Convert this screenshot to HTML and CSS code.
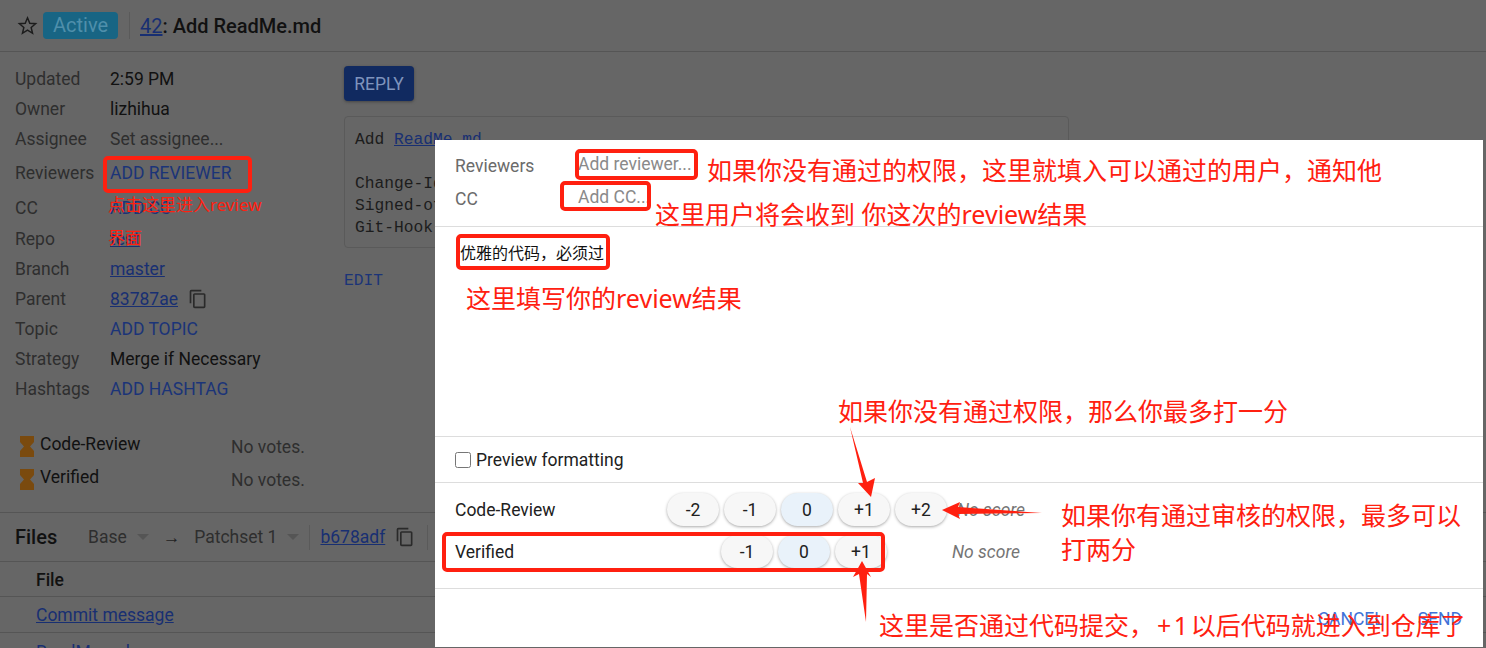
FILE: index.html
```html
<!DOCTYPE html>
<html>
<head>
    <title>42: Add ReadMe.md</title>
    <link rel="stylesheet" href="styles.css">
</head>

<body>
    <!-- Dimmed change page behind the reply dialog -->
    <header class="change-header">
        <svg class="star" viewBox="0 0 24 24"><path d="M12 3.2l2.6 6.2 6.7.55-5.1 4.4 1.55 6.55L12 17.4l-5.75 3.5 1.55-6.55-5.1-4.4 6.7-.55z" fill="none" stroke="#1c1c1c" stroke-width="1.7"/></svg>
        <span class="status">Active</span>
        <span class="header-sep"></span>
        <h1 class="subject"><a class="link">42</a>: Add ReadMe.md</h1>
    </header>

    <div class="change-main">
        <aside class="meta">
            <div class="meta-row"><span class="meta-label">Updated</span><span class="meta-value">2:59 PM</span></div>
            <div class="meta-row"><span class="meta-label">Owner</span><span class="meta-value">lizhihua</span></div>
            <div class="meta-row"><span class="meta-label">Assignee</span><span class="meta-value muted">Set assignee...</span></div>
            <div class="meta-row reviewers"><span class="meta-label">Reviewers</span><span class="meta-value action">ADD REVIEWER</span></div>
            <div class="meta-row cc"><span class="meta-label">CC</span><span class="meta-value action">ADD CC</span></div>
            <div class="meta-row"><span class="meta-label">Repo</span><a class="meta-value link">test</a></div>
            <div class="meta-row"><span class="meta-label">Branch</span><a class="meta-value link">master</a></div>
            <div class="meta-row">
                <span class="meta-label">Parent</span>
                <a class="meta-value link">83787ae</a>
                <svg class="copy" viewBox="0 0 24 24"><path d="M16 1H4a2 2 0 0 0-2 2v14h2V3h12zm3 4H8a2 2 0 0 0-2 2v14a2 2 0 0 0 2 2h11a2 2 0 0 0 2-2V7a2 2 0 0 0-2-2zm0 16H8V7h11z" fill="#2a2a2a"/></svg>
            </div>
            <div class="meta-row"><span class="meta-label">Topic</span><span class="meta-value action">ADD TOPIC</span></div>
            <div class="meta-row"><span class="meta-label">Strategy</span><span class="meta-value">Merge if Necessary</span></div>
            <div class="meta-row"><span class="meta-label">Hashtags</span><span class="meta-value action">ADD HASHTAG</span></div>

            <div class="votes">
                <div class="vote-row">
                    <span class="vote-name"><svg class="hourglass" viewBox="0 0 14 21"><path d="M0 0h14v6l-4 4.5 4 4.5v6H0v-6l4-4.5L0 6z" fill="#7a4a0e"/></svg>Code-Review</span>
                    <span class="vote-value">No votes.</span>
                </div>
                <div class="vote-row">
                    <span class="vote-name"><svg class="hourglass" viewBox="0 0 14 21"><path d="M0 0h14v6l-4 4.5 4 4.5v6H0v-6l4-4.5L0 6z" fill="#7a4a0e"/></svg>Verified</span>
                    <span class="vote-value">No votes.</span>
                </div>
            </div>
        </aside>

        <section class="message-col">
            <button class="reply-btn">REPLY</button>
            <pre class="commit-box">Add <a class="link">ReadMe.md</a>

Change-Id: I3a61c7d2
Signed-off-by: lizhihua
Git-Hook: gerrit</pre>
            <div class="edit-btn">EDIT</div>
        </section>
    </div>

    <section class="files">
        <div class="files-bar">
            <strong class="files-title">Files</strong>
            <span class="patch-select base">Base<i class="caret"></i></span>
            <span class="patch-arrow">→</span>
            <span class="patch-select">Patchset 1<i class="caret"></i></span>
            <span class="files-sep"></span>
            <a class="link">b678adf</a>
            <svg class="copy" viewBox="0 0 24 24"><path d="M16 1H4a2 2 0 0 0-2 2v14h2V3h12zm3 4H8a2 2 0 0 0-2 2v14a2 2 0 0 0 2 2h11a2 2 0 0 0 2-2V7a2 2 0 0 0-2-2zm0 16H8V7h11z" fill="#2a2a2a"/></svg>
            <span class="files-sep last"></span>
        </div>
        <div class="file-row head">File</div>
        <div class="file-row message"><a class="link">Commit message</a></div>
        <div class="file-row expand"><i class="expand-icon"></i><a class="link">ReadMe.md</a></div>
    </section>

    <!-- Reply dialog -->
    <div class="dialog">
        <div class="dialog-people">
            <div class="people-row"><span class="people-label">Reviewers</span><span class="people-input">Add reviewer...</span></div>
            <div class="people-row"><span class="people-label">CC</span><span class="people-input">Add CC...</span></div>
        </div>
        <div class="dialog-message">优雅的代码，必须过</div>
        <label class="dialog-preview"><input class="preview-check" type="checkbox">Preview formatting</label>
        <div class="dialog-labels">
            <div class="label-row">
                <span class="label-name">Code-Review</span>
                <div class="score-btns">
                    <button class="score">-2</button>
                    <button class="score">-1</button>
                    <button class="score zero">0</button>
                    <button class="score">+1</button>
                    <button class="score">+2</button>
                </div>
                <span class="no-score">No score</span>
            </div>
            <div class="label-row verified">
                <span class="label-name">Verified</span>
                <div class="score-btns">
                    <button class="score">-1</button>
                    <button class="score zero">0</button>
                    <button class="score">+1</button>
                </div>
                <span class="no-score">No score</span>
            </div>
        </div>
        <div class="dialog-actions"><span>CANCEL</span><span>SEND</span></div>
    </div>

    <!-- Red markup drawn on top of the screenshot -->
    <div class="mark box-add-reviewer"></div>
    <div class="mark box-reviewer"></div>
    <div class="mark box-cc"></div>
    <div class="mark box-message"></div>
    <div class="mark box-verified"></div>

    <div class="note small">点击这里进入review<br>界面</div>
    <div class="note n1">如果你没有通过的权限，这里就填入可以通过的用户，通知他</div>
    <div class="note n2">这里用户将会收到 你这次的review结果</div>
    <div class="note n3">这里填写你的review结果</div>
    <div class="note n4">如果你没有通过权限，那么你最多打一分</div>
    <div class="note n5">如果你有通过审核的权限，最多可以打两分</div>
    <div class="note n6">这里是否通过代码提交，<span class="plus-one">+1</span>以后代码就进入到仓库了</div>

    <svg class="arrows" viewBox="0 0 1486 648">
        <polygon points="850,427 867,482 875,478 871,497 858,483 863,483" fill="#ff2010"/>
        <polygon points="1042,513 958,507 960,502 942,510 960,519 958,514" fill="#ff2010"/>
        <polygon points="866,622 867,574 871,577 862,561 853,577 859,574" fill="#ff2010"/>
    </svg>
</body>
</html>
```

FILE: styles.css
```css
html, body {
    margin: 0;
    height: 648px;
    overflow: hidden;
}

body {
    position: relative;
    background-color: #666;
    color: #111;
    font-family: Roboto, sans-serif;
    font-size: 17.5px;
}

.link {
    color: #182f72;
    font-weight: 400;
    text-decoration: underline;
}

/* header */
.change-header {
    display: flex;
    align-items: center;
    height: 51px;
    padding-left: 17px;
    border-bottom: 1px solid #555;
    box-sizing: content-box;
}

.star {
    width: 21px;
    height: 21px;
    margin-right: 5px;
}

.status {
    width: 75px;
    height: 27px;
    line-height: 27px;
    text-align: center;
    background-color: #186584;
    color: #4f8fab;
    border-radius: 4px;
    font-size: 20px;
}

.header-sep {
    width: 1px;
    height: 27px;
    margin: 0 10px 0 11px;
    background-color: #5a5a5a;
}

.subject {
    margin: 0;
    font-size: 20px;
    font-weight: 500;
}

/* left column and commit message */
.change-main {
    display: flex;
    height: 460px;
}

.meta {
    width: 329px;
    padding: 12px 0 0 15px;
    box-sizing: border-box;
}

.meta-row {
    display: flex;
    align-items: center;
    height: 30px;
}

.meta-row.reviewers {
    height: 38px;
}

.meta-row.cc {
    height: 32px;
}

.meta-label {
    width: 95px;
    color: #2e2e2e;
}

.meta-value.muted {
    color: #2e2e2e;
}

.action {
    color: #1b3478;
}

.copy {
    width: 20px;
    height: 20px;
    margin-left: 10px;
}

.votes {
    margin-top: 28px;
    margin-left: 5px;
}

.vote-row {
    display: flex;
    height: 33px;
}

.vote-name {
    display: flex;
    width: 211px;
    height: 24px;
    align-items: center;
}

.hourglass {
    width: 14px;
    height: 21px;
    margin-right: 6px;
    margin-top: 5px;
}

.vote-value {
    color: #2e2e2e;
    margin-top: 5px;
}

.message-col {
    padding-left: 15px;
    padding-top: 14px;
}

.reply-btn {
    display: block;
    width: 70px;
    height: 35px;
    background-color: #112a60;
    color: #7f94bd;
    border: none;
    border-radius: 4px;
    font-family: Roboto, sans-serif;
    font-size: 17.5px;
    padding: 0;
    box-shadow: 0 1px 3px #444;
}

.commit-box {
    width: 725px;
    height: 132px;
    margin: 15px 0 0;
    padding: 12px 10px 0;
    box-sizing: border-box;
    border: 1px solid #5a5a5a;
    border-radius: 4px;
    font-family: "Liberation Mono", monospace;
    font-size: 16.25px;
    line-height: 22px;
    color: #1c1c1c;
}

.edit-btn {
    margin-top: 23px;
    font-family: "Liberation Mono", monospace;
    font-size: 16.25px;
    color: #1b3478;
}

/* files table */
.files {
    border-top: 1px solid #555;
}

.files-bar {
    display: flex;
    align-items: center;
    height: 48px;
    padding-left: 15px;
    border-bottom: 1px solid #555;
}

.files-title {
    width: 73px;
    font-size: 20px;
    font-weight: 500;
}

.patch-select {
    display: flex;
    align-items: center;
    color: #2e2e2e;
}

.caret {
    width: 0;
    height: 0;
    margin-left: 10px;
    border-left: 6px solid transparent;
    border-right: 6px solid transparent;
    border-top: 6px solid #555;
}

.patch-arrow {
    margin: 0 14px;
    color: #222;
}

.files-sep {
    width: 1px;
    height: 25px;
    margin: 0 10px;
    background-color: #5a5a5a;
}

.files-sep.last {
    margin-left: 12px;
}

.file-row {
    height: 35px;
    line-height: 35px;
    padding-left: 36px;
    border-bottom: 1px solid #555;
}

.file-row.head {
    height: 34px;
    line-height: 36px;
    font-weight: 500;
}

.file-row.message {
    line-height: 37px;
}

.file-row.expand {
    display: flex;
    align-items: center;
    padding-left: 11px;
    height: 30px;
    margin-top: 4px;
    line-height: 30px;
}

.expand-icon {
    width: 0;
    height: 0;
    margin-right: 19px;
    border-left: 3px solid transparent;
    border-right: 3px solid transparent;
    border-bottom: 5px solid #222;
}

/* reply dialog */
.dialog {
    position: absolute;
    left: 435px;
    top: 140px;
    width: 1048px;
    height: 507px;
    display: flex;
    flex-direction: column;
    background-color: #fff;
    color: #212121;
}

.dialog-people {
    height: 87px;
    padding: 9px 20px 0;
    box-sizing: border-box;
    border-bottom: 1px solid #ddd;
}

.people-row {
    display: flex;
    align-items: center;
    height: 33px;
}

.people-label {
    width: 123px;
    color: #6b6b6b;
}

.people-input {
    color: #8a8a8a;
    margin-top: -3px;
}

.dialog-message {
    height: 210px;
    padding: 13px 25px 0;
    box-sizing: border-box;
    font-family: "Noto Sans CJK SC", sans-serif;
    font-size: 16px;
    border-bottom: 1px solid #ddd;
    color: #111;
}

.dialog-preview {
    display: flex;
    align-items: center;
    height: 46px;
    padding-left: 20px;
    box-sizing: border-box;
    border-bottom: 1px solid #ddd;
}

.preview-check {
    width: 16px;
    height: 16px;
    margin: 0 5px 0 0;
}

.dialog-labels {
    height: 106px;
    padding: 9px 20px 0;
    box-sizing: border-box;
    border-bottom: 1px solid #ddd;
}

.label-row {
    display: flex;
    align-items: center;
    height: 35px;
    margin-bottom: 7px;
}

.label-name {
    width: 212px;
}

.score-btns {
    display: flex;
    gap: 5px;
    width: 290px;
}

.verified .score-btns {
    margin-left: 54px;
    width: 231px;
}

.score {
    width: 52px;
    height: 33px;
    padding: 0;
    border: none;
    border-radius: 17px;
    background-color: #f7f7f7;
    box-shadow: 0 1px 3px #aaa;
    font-family: Roboto, sans-serif;
    font-size: 17.5px;
    color: #212121;
}

.score.zero {
    background-color: #e9f2fa;
}

.no-score {
    color: #757575;
    font-style: italic;
}

.dialog-actions {
    display: flex;
    justify-content: flex-end;
    gap: 34px;
    padding: 20px 21px 0 0;
    color: #3f73d8;
}

/* red markup */
.mark {
    position: absolute;
    border: 4px solid #ff2010;
    border-radius: 5px;
    box-sizing: border-box;
}

.box-add-reviewer { left: 103px; top: 156px; width: 149px; height: 37px; }
.box-reviewer { left: 575px; top: 149px; width: 123px; height: 31px; }
.box-cc { left: 560px; top: 181px; width: 91px; height: 30px; }
.box-message { left: 456px; top: 234px; width: 154px; height: 36px; }
.box-verified { left: 442px; top: 532px; width: 443px; height: 40px; }

.note {
    position: absolute;
    color: #ff2010;
    font-family: "Noto Sans", "Noto Sans CJK SC", sans-serif;
    font-size: 25px;
    line-height: 34px;
    white-space: nowrap;
}

.note.small {
    left: 108px;
    top: 188px;
    font-size: 17px;
    line-height: 33px;
}

.plus-one {
    margin-left: 3px;
    letter-spacing: 2.5px;
}

.n1 { left: 707px; top: 153px; }
.n2 { left: 655px; top: 197px; }
.n3 { left: 466px; top: 281px; }
.n4 { left: 838px; top: 394px; }
.n5 { left: 1061px; top: 498px; width: 410px; white-space: normal; }
.n6 { left: 879px; top: 608px; }

.arrows {
    position: absolute;
    left: 0;
    top: 0;
    width: 1486px;
    height: 648px;
    pointer-events: none;
}
```
